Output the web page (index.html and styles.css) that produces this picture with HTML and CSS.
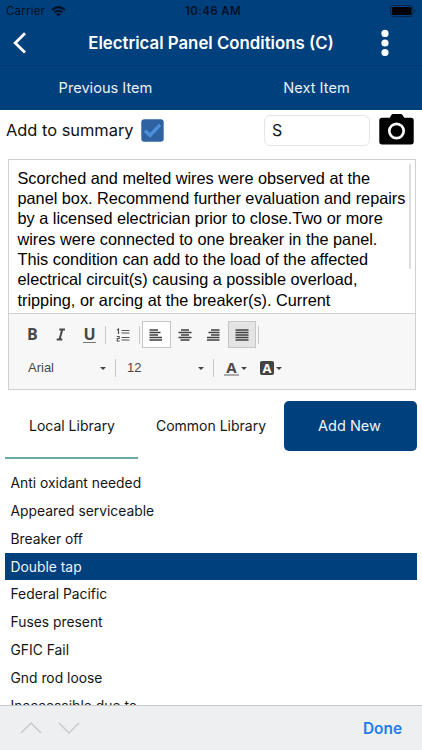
FILE: index.html
```html
<!DOCTYPE html>
<html lang="en">
<head>
<meta charset="utf-8">
<title>Electrical Panel Conditions (C)</title>
<link rel="stylesheet" href="styles.css">
</head>
<body>
<div class="screen">
  <header class="header">
    <div class="status">
      <div class="carrier"><span>Carrier</span>
        <svg width="15" height="11" viewBox="0 0 15 11"><g fill="none" stroke="#001126" stroke-width="2"><path d="M1 4.1Q7.5-1.9 14 4.1"/><path d="M3.4 6.6Q7.5 2.9 11.6 6.6"/></g><path d="M5.1 8.2Q7.5 6.2 9.9 8.2L7.5 10.6Z" fill="#001126"/></svg>
      </div>
      <span class="time">10:46 AM</span>
      <svg class="battery" width="26" height="12" viewBox="0 0 26 12"><rect x=".5" y=".5" width="22.5" height="11" rx="3" fill="none" stroke="#002650"/><rect x="2" y="2" width="19.5" height="8" rx="1.6" fill="#000"/><path d="M24.2 4v4q1.3-.6 1.3-2t-1.3-2z" fill="#002650"/></svg>
    </div>
    <div class="titlebar">
      <svg width="14" height="22" viewBox="0 0 14 22"><path d="M12 1.3 2.2 11 12 20.6" fill="none" stroke="#fff" stroke-width="2.8"/></svg>
      <h1>Electrical Panel Conditions (C)</h1>
      <svg class="more" width="8" height="28" viewBox="0 0 8 28" fill="#fff"><circle cx="4" cy="4.4" r="3.6"/><circle cx="4" cy="14" r="3.6"/><circle cx="4" cy="23.5" r="3.6"/></svg>
    </div>
    <nav class="pager"><span class="prev">Previous Item</span><span class="next">Next Item</span></nav>
  </header>

  <div class="summary">
    <span class="label">Add to summary</span>
    <svg class="check" width="23" height="23" viewBox="0 0 23 23"><rect x=".3" y=".3" width="22.4" height="22.4" rx="3" fill="#2f62a1"/><path d="m4 11.8 5 4.6L19 5.8" fill="none" stroke="#4d91dc" stroke-width="3.2"/></svg>
    <div class="code">S</div>
    <svg class="camera" width="35" height="31" viewBox="0 0 35 31"><path d="M3 3.7h7.8L12.4 1q.6-.9 1.7-.9h7.6q1.1 0 1.8.9l1.7 2.7H32q2.7 0 2.7 2.8v21.2q0 2.7-2.7 2.7H3Q.3 30.4.3 27.7V6.5Q.3 3.7 3 3.7z"/><circle cx="17.5" cy="17" r="7.2" fill="none" stroke="#fff" stroke-width="2.7"/></svg>
  </div>

  <section class="editor">
    <div class="text">
      <div>Scorched and melted wires were observed at the</div>
      <div>panel box. Recommend further evaluation and repairs</div>
      <div>by a licensed electrician prior to close.Two or more</div>
      <div>wires were connected to one breaker in the panel.</div>
      <div>This condition can add to the load of the affected</div>
      <div>electrical circuit(s) causing a possible overload,</div>
      <div>tripping, or arcing at the breaker(s). Current</div>
      <i class="scroll"></i>
    </div>
    <div class="tools">
      <div class="row marks">
        <b class="tool bold">B</b>
        <svg class="italic" width="10" height="13" viewBox="0 0 10 13"><path d="M3.300 1.500H9M.7 11.500H6.300M6.300 1.500 3.500 11.500" fill="none" stroke="#484848" stroke-width="2"/></svg>
        <b class="tool underline">U</b>
        <i class="sep"></i>
        <svg class="list" width="14" height="14" viewBox="0 0 14 14"><path d="M1 2 2.5 1v5M.8 8.5h2.4v2H1.300V13h2.500M5.500 2.500h8M5.500 5h8M5.500 9.500h8M5.500 12h8" fill="none" stroke="#555" stroke-width="1.2"/></svg>
        <i class="sep"></i>
        <span class="align on"><svg width="14" height="12" viewBox="0 0 14 12"><path d="M.5 1H9M.5 3.5H11.500M.5 6H9M.5 8.5H13M.5 11H13"/></svg></span>
        <span class="align"><svg width="14" height="12" viewBox="0 0 14 12"><path d="M3 1H11M.5 3.5H13.5M3 6H11M.5 8.5H13.5M2.5 11H11.5"/></svg></span>
        <span class="align"><svg width="14" height="12" viewBox="0 0 14 12"><path d="M5 1H13.5M2.500 3.5H13.5M5 6H13.5M1 8.5H13.5M1 11H13.5"/></svg></span>
        <span class="align full"><svg width="14" height="12" viewBox="0 0 14 12"><path d="M.5 1H13.5M.5 3.5H13.5M.5 6H13.5M.5 8.5H13.5M.5 11H13.5"/></svg></span>
        <i class="sep last"></i>
      </div>
      <div class="row fonts">
        <span class="family">Arial</span><i class="caret"></i><i class="sep"></i>
        <span class="size">12</span><i class="caret"></i><i class="sep"></i>
        <b class="color">A</b><i class="caret"></i>
        <b class="fill">A</b><i class="caret"></i>
      </div>
    </div>
  </section>

  <nav class="tabs">
    <div class="tab current"><span>Local Library</span></div>
    <div class="tab common"><span>Common Library</span></div>
    <div class="tab add"><span>Add New</span></div>
  </nav>
  <ul class="library">
    <li>Anti oxidant needed</li>
    <li>Appeared serviceable</li>
    <li>Breaker off</li>
    <li class="selected">Double tap</li>
    <li>Federal Pacific</li>
    <li>Fuses present</li>
    <li>GFIC Fail</li>
    <li>Gnd rod loose</li>
    <li>Inaccessible due to</li>
  </ul>
  <footer class="keyboard">
    <svg width="60" height="14" viewBox="0 0 60 14"><path d="m1 12 10-10 10 10M39 2l10 10L59 2" fill="none" stroke="#cbcccf" stroke-width="1.5"/></svg>
    <span>Done</span>
  </footer>
</div>
</body>
</html>
```
FILE: styles.css
```css
* { box-sizing: border-box; }
body { margin: 0; }
svg { display: block; flex: none; }
.screen {
  width: 422px; height: 750px; overflow: hidden;
  display: flex; flex-direction: column;
  background: #fff; color: #151515;
  font: 14px/20px Inter, "Liberation Sans", sans-serif;
  white-space: nowrap;
}
.header { flex: none; height: 110px; background: #00407c; color: #fff; }
.status {
  height: 22px; padding: 0 6px;
  display: grid; grid-template-columns: 1fr auto 1fr; align-items: center;
  color: #001126; font-size: 11.5px;
}
.carrier { display: flex; align-items: center; gap: 6px; letter-spacing: .2px; }
.time { padding-left: 4px; font-weight: 600; letter-spacing: .4px; }
.battery { justify-self: end; }
.titlebar {
  height: 44px; padding: 0 33px 2px 13px;
  display: flex; align-items: center; justify-content: space-between;
  border-bottom: 1px solid #003a72;
}
h1 { margin: 0 0 0 14px; font-size: 16.8px; font-weight: 600; line-height: 20px; }
.pager { display: grid; grid-template-columns: 1fr 1fr; height: 44px; align-items: center; text-align: center; font-size: 14.6px; color: #eaf0f6; }
.summary { flex: none; height: 49px; padding: 3px 8px 0 6px; display: flex; align-items: flex-start; }
.label { width: 135px; padding-top: 7px; font-size: 16.4px; color: #111; }
.check { margin-top: 6px; }
.code { width: 106px; height: 31px; margin: 2px 9px 0 100px; padding: 4px 7px; border: 1px solid #e6e6e6; border-radius: 6px; font-size: 16px; }
.camera { margin-top: 1px; }
.editor { flex: none; height: 231px; width: 408px; margin-left: 8px; border: 1px solid #d0d0d0; display: flex; flex-direction: column; }
.text { position: relative; height: 153px; overflow: hidden; padding: 7.5px 0 0 8.5px; font: 16.27px/20.35px "Liberation Sans", sans-serif; color: #000; }
.scroll { position: absolute; right: 4px; top: 4px; width: 2px; height: 105px; background: #ddd; border-radius: 1px; }
.tools { flex: 1; border-top: 1px solid #d0d0d0; background: #f7f7f7; color: #484848; }
.row { display: flex; align-items: center; }
.marks { height: 41px; padding-left: 17px; }
.tool { width: 28.5px; padding-left: 1px; font: bold 16px/19px "Open Sans", sans-serif; }
.italic { margin: 0 17px 0 1.5px; }
.underline { width: 13px; padding: 0; text-align: center; border-bottom: 1px solid #777; line-height: 16px; }
.sep { width: 1px; height: 18px; background: #c9c9c9; }
.marks .sep { margin-left: 9px; }
.list { margin-left: 10px; }
.align { width: 28.5px; height: 27px; display: grid; place-items: center; border: 1px solid transparent; }
.align path { fill: none; stroke: #3f3f3f; stroke-width: 1.6; }
.on { margin-left: 2px; background: #fff; border-color: #c6c6c6; }
.full { background: #e4e4e4; border-color: #c6c6c6; }
.marks .last { margin-left: 2px; }
.fonts { height: 26px; padding-left: 19px; font: 13px/18px "Liberation Sans", sans-serif; }
.family { width: 72px; }
.caret { border: 3px solid transparent; border-top-color: #444; border-bottom: 0; }
.fonts .sep { margin-left: 9px; }
.size { width: 71px; margin-left: 11px; }
.color { width: 15px; margin: 0 2px 0 10px; border-bottom: 2px solid #aaa; text-align: center; font: bold 15px/14px "Open Sans", sans-serif; }
.fill { width: 14px; height: 14px; margin: 0 2px 0 13px; background: #444; color: #fff; border-radius: 2px; text-align: center; font: bold 13px/14px "Open Sans", sans-serif; }
.tabs { flex: none; height: 69px; padding: 11px 5px 0; display: grid; grid-template-columns: 133px 1fr 133px; align-items: start; text-align: center; font-size: 14px; }
.tab { height: 50px; padding-top: 15px; }
.current { height: 58px; padding-left: 1px; border-bottom: 2px solid #6aa9a5; }
.add { padding-right: 2px; background: #00407c; color: #eef4f9; border-radius: 5px; font-size: 14.5px; }
.library { list-style: none; margin: 10px 5px 0; padding: 0; flex: 1; min-height: 0; overflow: hidden; }
.library li { height: 27.85px; padding: 4px 5.5px; font-size: 13.85px; }
.library .selected { background: #00407c; color: #eef4f9; }
.keyboard { flex: none; height: 45px; padding: 2px 20px 0; border-top: 1px solid #c8c8cb; background: #eeeff1; display: flex; align-items: center; justify-content: space-between; font-size: 15.4px; font-weight: 600; color: #227bea; }
.keyboard svg { margin-bottom: 2px; }
```
